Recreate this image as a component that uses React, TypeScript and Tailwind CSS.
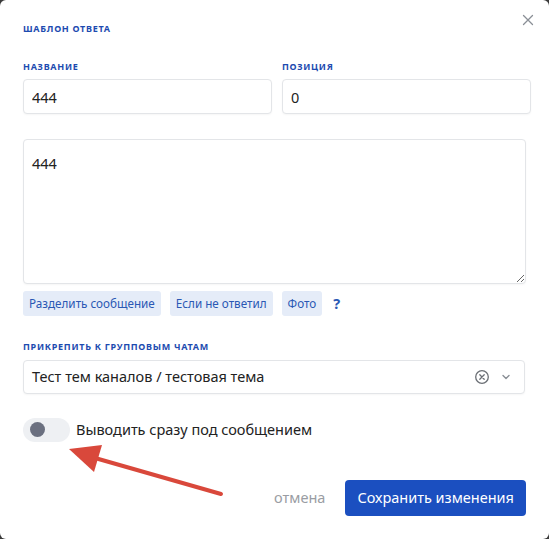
import React, { useState } from 'react';

const labelCls = 'block text-[9px] font-bold uppercase tracking-[0.08em] text-[#1d4bb0]';
const fieldCls =
    'w-full rounded-[4px] border border-[#e3e5e8] bg-white px-2 text-[14.5px] text-[#222] shadow-[0_1px_2px_rgba(0,0,0,0.04)] focus:outline-none';

const Chip: React.FC<{ children: React.ReactNode }> = ({ children }) => (
    <button type="button" className="flex h-[25px] items-center rounded-[3px] bg-[#e5ecf8] px-[6px] text-[11.7px] text-[#2a58b4]">
        {children}
    </button>
);

export default function App() {
    const [title, setTitle] = useState('444');
    const [position, setPosition] = useState('0');
    const [text, setText] = useState('444');
    const [inline, setInline] = useState(false);

    return (
        <div className="h-[539px] w-[549px] bg-[#3a3a3a]" style={{ fontFamily: '"Noto Sans", Roboto, sans-serif' }}>
            <div className="relative h-full w-full rounded-[6px] bg-white px-[23px] pt-[22px]">
                <button type="button" className="absolute right-[11px] top-[10px] flex h-[20px] w-[20px] items-center justify-center text-[#8a8f96]">
                    <svg width="12" height="12" viewBox="0 0 12 12" fill="none">
                        <path d="M1.5 1.5L10.5 10.5M10.5 1.5L1.5 10.5" stroke="currentColor" strokeWidth="1.3" strokeLinecap="round" />
                    </svg>
                </button>

                <h2 className={labelCls}>Шаблон ответа</h2>

                {/* поля названия и позиции чуть шире, чем текстовое поле */}
                <div className="-mr-[5px] mt-[24px] flex gap-[10px]">
                    <div className="flex-1">
                        <label className={labelCls}>Название</label>
                        <input
                            className={`${fieldCls} mt-[6px] h-[35px]`}
                            value={title}
                            onChange={e => setTitle(e.target.value)}
                        />
                    </div>
                    <div className="flex-1">
                        <label className={labelCls}>Позиция</label>
                        <input
                            className={`${fieldCls} mt-[6px] h-[35px]`}
                            value={position}
                            onChange={e => setPosition(e.target.value)}
                        />
                    </div>
                </div>

                <textarea
                    className={`${fieldCls} mt-[25px] block h-[145px] resize-y py-[13px] leading-[20px]`}
                    value={text}
                    onChange={e => setText(e.target.value)}
                />

                <div className="mt-[7px] flex items-center gap-[9px]">
                    <Chip>Разделить сообщение</Chip>
                    <Chip>Если не ответил</Chip>
                    <Chip>Фото</Chip>
                    <span className="ml-[2px] text-[14.5px] font-bold text-[#2a58b4]">?</span>
                </div>

                <label className={`${labelCls} mt-[24px]`}>Прикрепить к групповым чатам</label>
                <div className="mr-[1px] mt-[6px] flex h-[34px] items-center rounded-[4px] border border-[#e3e5e8] bg-white pl-[8px] pr-[12px] shadow-[0_1px_2px_rgba(0,0,0,0.04)]">
                    <span className="flex-1 text-[14.5px] text-[#222]">Тест тем каналов / тестовая тема</span>
                    <svg width="16" height="16" viewBox="0 0 16 16" fill="none" className="text-[#6b6f75]">
                        <circle cx="8" cy="8" r="6.3" stroke="currentColor" strokeWidth="1.3" />
                        <path d="M5.8 5.8L10.2 10.2M10.2 5.8L5.8 10.2" stroke="currentColor" strokeWidth="1.3" strokeLinecap="round" />
                    </svg>
                    <svg width="12" height="12" viewBox="0 0 12 12" fill="none" className="ml-[10px] text-[#8a8f96]">
                        <path d="M3 4.5L6 7.5L9 4.5" stroke="currentColor" strokeWidth="1.4" strokeLinecap="round" strokeLinejoin="round" />
                    </svg>
                </div>

                <div className="mt-[24px] flex h-[24px] items-center gap-[6px]">
                    <button
                        type="button"
                        onClick={() => setInline(!inline)}
                        className="flex h-[24px] w-[47px] items-center rounded-full bg-[#eef0f3] px-[7px]"
                    >
                        <span className={`h-[15px] w-[15px] rounded-full ${inline ? 'ml-auto bg-[#1b4fc0]' : 'bg-[#6b7080]'}`} />
                    </button>
                    <span className="text-[14.5px] text-[#222]">Выводить сразу под сообщением</span>
                </div>

                <div className="mt-[38px] flex items-center justify-end gap-[20px]">
                    <button type="button" className="text-[14.5px] text-[#9a9da3]">отмена</button>
                    <button type="button" className="h-[36px] rounded-[4px] bg-[#1b4fc0] px-[12px] text-[14.5px] text-white">
                        Сохранить изменения
                    </button>
                </div>

                <svg className="pointer-events-none absolute left-0 top-0" width="549" height="539" viewBox="0 0 549 539">
                    <path d="M221 494L88 456" stroke="#d9483b" strokeWidth="4" strokeLinecap="round" />
                    <path d="M69 449L102 445L94 472Z" fill="#d9483b" />
                </svg>
            </div>
        </div>
    );
}
